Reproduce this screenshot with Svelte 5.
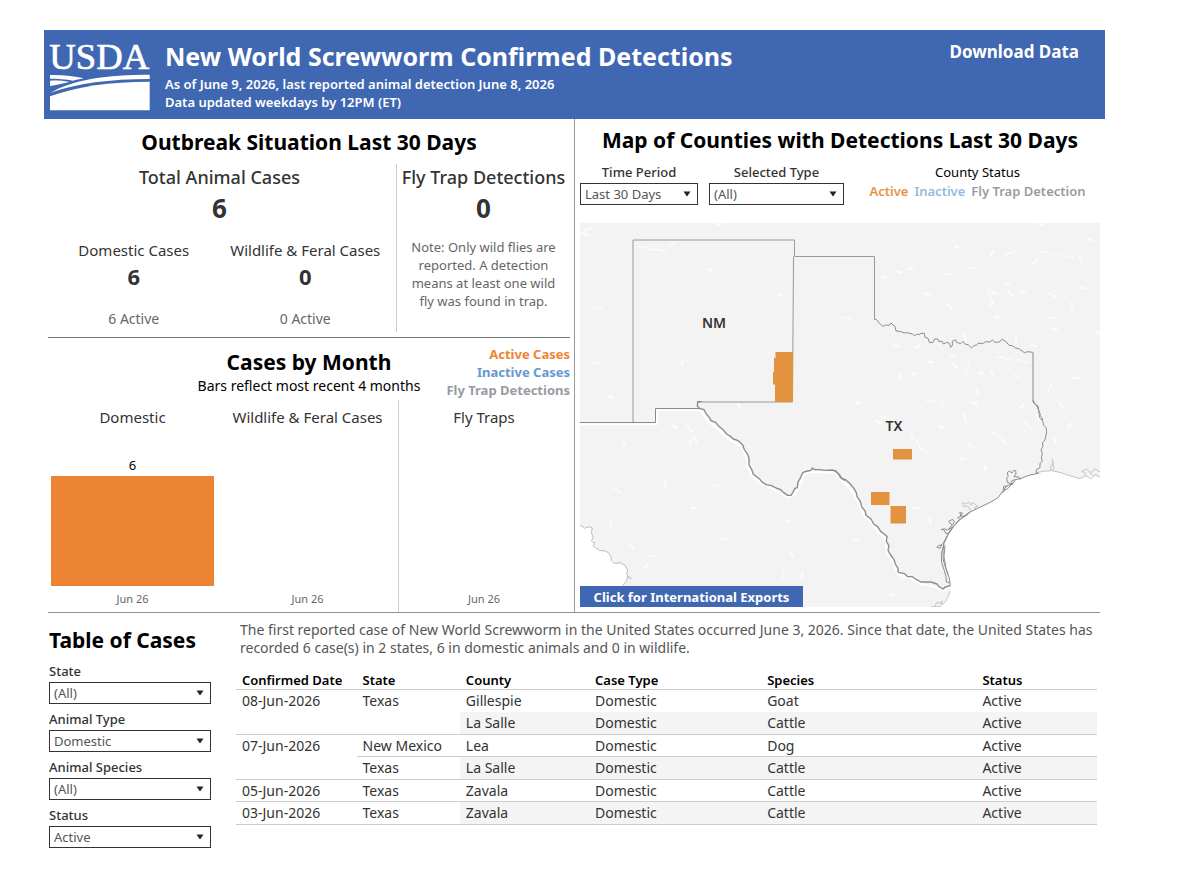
<script>
  const logoText = 'USDA';

  const mapFilters = [
    { id: 'time-period', label: 'Time Period', value: 'Last 30 Days', options: ['Last 30 Days', 'All Time'] },
    { id: 'selected-type', label: 'Selected Type', value: '(All)', options: ['(All)', 'Animal', 'Fly Trap'] }
  ];

  const tableFilters = [
    { id: 'state', label: 'State', value: '(All)', options: ['(All)', 'New Mexico', 'Texas'] },
    { id: 'animal-type', label: 'Animal Type', value: 'Domestic', options: ['(All)', 'Domestic', 'Wildlife'] },
    { id: 'animal-species', label: 'Animal Species', value: '(All)', options: ['(All)', 'Cattle', 'Dog', 'Goat'] },
    { id: 'status', label: 'Status', value: 'Active', options: ['(All)', 'Active', 'Inactive'] }
  ];

  const months = [
    { label: 'Domestic', month: 'Jun 26', count: 6 },
    { label: 'Wildlife & Feral Cases', month: 'Jun 26', count: 0 },
    { label: 'Fly Traps', month: 'Jun 26', count: 0 }
  ];

  const headings = ['Confirmed Date', 'State', 'County', 'Case Type', 'Species', 'Status'];

  // dateSpan / stateSpan mark the first row of a merged group
  const cases = [
    { date: '08-Jun-2026', dateSpan: 2, state: 'Texas', stateSpan: 2, rest: ['Gillespie', 'Domestic', 'Goat', 'Active'], line: false },
    { rest: ['La Salle', 'Domestic', 'Cattle', 'Active'], line: true },
    { date: '07-Jun-2026', dateSpan: 2, state: 'New Mexico', stateSpan: 1, rest: ['Lea', 'Domestic', 'Dog', 'Active'], line: true },
    { state: 'Texas', stateSpan: 1, rest: ['La Salle', 'Domestic', 'Cattle', 'Active'], line: true },
    { date: '05-Jun-2026', dateSpan: 1, state: 'Texas', stateSpan: 1, rest: ['Zavala', 'Domestic', 'Cattle', 'Active'], line: true },
    { date: '03-Jun-2026', dateSpan: 1, state: 'Texas', stateSpan: 1, rest: ['Zavala', 'Domestic', 'Cattle', 'Active'], line: true }
  ];

  // small lakes: x, y, length, tilt
  const lakes = [
    [588, 229, 12, -30], [585, 234, 8, 20], [646, 248, 14, 10], [660, 250, 12, 0], [672, 244, 9, -50], [710, 270, 3, 0],
    [780, 295, 4, 0], [682, 363, 5, 90], [598, 308, 9, 5], [596, 363, 6, 0], [611, 397, 4, 0], [718, 224, 4, 10],
    [675, 427, 6, 20], [689, 428, 10, 50], [696, 440, 9, 60], [691, 441, 5, -60], [624, 446, 7, 90], [665, 484, 5, 90],
    [617, 490, 9, 25], [718, 486, 7, 0], [693, 508, 4, 0], [611, 526, 8, 90], [632, 547, 6, 30], [652, 556, 7, 0],
    [645, 567, 8, -50], [726, 539, 8, 0], [792, 555, 5, 60], [783, 575, 9, 90], [802, 576, 6, 90], [788, 521, 4, 0],
    [957, 247, 4, 0], [992, 253, 6, -70], [1010, 253, 10, -25], [1047, 253, 12, 10], [1066, 256, 14, 15], [1081, 261, 9, 60],
    [1035, 262, 8, -50], [1083, 288, 10, 0], [1052, 295, 9, 20], [1072, 306, 8, 70], [990, 297, 12, 60], [993, 292, 10, 20],
    [991, 304, 7, -50], [1010, 293, 7, 50], [1008, 284, 6, -50], [1023, 292, 4, 0], [1051, 318, 9, 0], [1054, 329, 6, 0],
    [997, 317, 4, 0], [971, 268, 7, -10], [949, 274, 8, 0], [911, 269, 5, 0], [898, 272, 6, 0], [950, 307, 6, 30],
    [884, 277, 4, 0], [927, 294, 5, 0], [847, 318, 8, 0], [896, 346, 4, 0], [917, 347, 6, -40], [931, 362, 4, 0],
    [953, 356, 7, -30], [955, 366, 6, 40], [967, 369, 11, -75], [981, 373, 5, 0], [992, 373, 4, 60], [1004, 358, 16, 5],
    [1022, 361, 12, 8], [1017, 376, 7, 30], [914, 374, 5, 0], [900, 377, 4, 60], [977, 391, 9, 60], [974, 402, 8, -20],
    [1050, 388, 8, -70], [1061, 405, 8, 50], [1076, 378, 6, 0], [1098, 333, 5, 30], [942, 402, 7, 70], [930, 401, 8, 0],
    [883, 417, 5, 0], [858, 403, 4, 0], [965, 418, 9, 60], [975, 404, 5, 0], [1028, 426, 14, 35], [1038, 418, 7, 60],
    [1022, 406, 6, -50], [995, 434, 10, 20], [1004, 441, 9, 50], [971, 446, 9, 30], [919, 445, 13, 60], [925, 450, 8, 30],
    [941, 427, 4, 0], [912, 436, 7, 70], [930, 520, 9, 70], [917, 508, 6, 0], [856, 540, 4, 0], [892, 595, 4, 0],
    [903, 578, 4, 0], [962, 459, 5, 0], [985, 468, 6, 50], [1016, 340, 5, 80], [1034, 346, 4, 0], [739, 406, 4, 40],
    [879, 422, 6, 20], [1090, 240, 4, 0], [1040, 224, 5, 20], [965, 337, 6, 80], [1055, 440, 5, 60], [1070, 425, 5, -60]
  ];
</script>

{#snippet picker(filter)}
  <div class="field">
    <label for={filter.id}>{filter.label}</label>
    <div class="select">
      <select id={filter.id} value={filter.value}>
        {#each filter.options as option}
          <option value={option}>{option}</option>
        {/each}
      </select>
      <svg class="arrow" viewBox="0 0 8 6" aria-hidden="true"><path d="M0.5 0.5h7L4 5.5z" /></svg>
    </div>
  </div>
{/snippet}

<div class="page">
  <header class="banner">
    <svg class="logo" viewBox="24 36 312 222" role="img" aria-label="USDA">
      <text x="28" y="133" class="wordmark">{logoText}</text>
      <path d="M30 150C70 149 102 153 131 160C118 163 108 165 99 167C78 162 52 161 30 161z" />
      <path d="M30 167C50 166 70 167 88 171C66 176 49 181 30 183z" />
      <path d="M30 204C100 163 200 149 329 149V162C210 162 110 175 30 204z" />
      <path d="M30 214C110 184 210 170 329 170V256H30z" />
    </svg>
    <div class="titles">
      <h1>New World Screwworm Confirmed Detections</h1>
      <p>As of June 9, 2026, last reported animal detection June 8, 2026</p>
      <p>Data updated weekdays by 12PM (ET)</p>
    </div>
    <a class="download" href="#download">Download Data</a>
  </header>

  <main>
    <div class="overview">
      <div class="left">
        <section class="situation">
          <h2>Outbreak Situation Last 30 Days</h2>
          <div class="stats">
            <div class="animals">
              <h3>Total Animal Cases</h3>
              <p class="total">6</p>
              <div class="split">
                <div>
                  <h4>Domestic Cases</h4>
                  <p class="count">6</p>
                  <p class="active">6 Active</p>
                </div>
                <div>
                  <h4>Wildlife &amp; Feral Cases</h4>
                  <p class="count">0</p>
                  <p class="active">0 Active</p>
                </div>
              </div>
            </div>
            <div class="traps">
              <h3>Fly Trap Detections</h3>
              <p class="total">0</p>
              <p class="note">Note: Only wild flies are reported. A detection means at least one wild fly was found in trap.</p>
            </div>
          </div>
        </section>

        <section class="monthly">
          <div class="monthly-head">
            <div class="monthly-title">
              <h2>Cases by Month</h2>
              <p>Bars reflect most recent 4 months</p>
            </div>
            <ul class="legend">
              <li class="orange">Active Cases</li>
              <li class="blue">Inactive Cases</li>
              <li class="grey">Fly Trap Detections</li>
            </ul>
          </div>
          <div class="charts">
            {#each months as m}
              <div class="chart">
                <h4>{m.label}</h4>
                <div class="plot">
                  {#if m.count}
                    <span class="value">{m.count}</span>
                    <div class="bar" style="height: {(m.count / 6) * 110}px"></div>
                  {/if}
                </div>
                <p class="month">{m.month}</p>
              </div>
            {/each}
          </div>
        </section>
      </div>

      <section class="map-panel">
        <h2>Map of Counties with Detections Last 30 Days</h2>
        <div class="map-controls">
          {#each mapFilters as filter}
            {@render picker(filter)}
          {/each}
          <div class="status-key">
            <p>County Status</p>
            <ul>
              <li class="key-orange">Active</li>
              <li class="key-blue">Inactive</li>
              <li class="grey">Fly Trap Detection</li>
            </ul>
          </div>
        </div>
        <div class="map">
          <svg viewBox="580 223 520 384" role="img" aria-label="Counties with detections in New Mexico and Texas">
            <rect x="580" y="223" width="520" height="384" fill="#f3f3f3" />
            <g stroke="#fff" stroke-linecap="round" fill="none">
              {#each lakes as [x, y, len, tilt]}
                <path d="M{-len / 2} 0q{len / 4} -1.5 {len / 2} 0t{len / 2} 0" transform="translate({x} {y}) rotate({tilt})" stroke-width={len > 6 ? 1.4 : 2} opacity="0.75" />
              {/each}
            </g>

            <!-- Gulf of Mexico and Pacific inlet -->
            <g transform="translate(835 400) scale(0.33333)" stroke-linejoin="round">
              <path fill="#fff" d="M604 218L650 213L690 222L735 236L765 226L798 232V625H318L333 600L346 570V555L340 530L330 500L324 470L325 435L335 410L352 385L375 360L400 343L420 330L460 310L490 292L505 272L538 247L553 237L585 225z" />
              <path fill="none" stroke="#c4c4c4" stroke-width="3" d="M604 218L625 214L650 212L675 217L700 226L735 236L752 227L748 217L740 215L755 207L767 218L780 207L796 216M752 227L770 236L780 224L795 231M765 218L775 230M649 211L647 196L654 194L652 178L657 205L653 211M345 572L340 590L330 607L318 615L322 604L312 610L306 606L300 618M318 620L290 620" />
              <path fill="none" stroke="#c4c4c4" stroke-width="3" d="M408 332L398 318L386 320L383 307L392 312L402 306L408 316L412 308L422 314L428 320L418 322L422 330" />
            </g>
            <g transform="translate(575 400) scale(0.33333)">
              <path fill="#fff" d="M14 378L30 383L50 383L50 400L55 435L75 452L100 458L118 490L145 492L158 510L155 540L143 558V625H14z" />
              <path fill="none" stroke="#bdbdbd" stroke-width="3" d="M14 378L22 378L28 385L40 380L52 384L49 398L55 412L49 423L60 430L54 438L66 446L75 452L88 452L100 458L108 470L109 482L118 490L135 488L150 496L158 510L155 525L169 536L158 530L155 542L143 556" />
            </g>

            <!-- state and national borders -->
            <g fill="none" stroke="#fff" stroke-width="6" stroke-linejoin="round">
              <path transform="translate(575 400) scale(0.33333)" d="M14 73H246V31H362L379 34L398 64L430 88L464 120L486 131L503 148L516 178L518 198L532 230L568 257L597 268L620 282L640 293L654 288L671 266L687 223L712 215L725 216L777 218L793 235L806 248" />
              <path transform="translate(835 400) scale(0.33333)" d="M0 218L35 255L60 287L76 322L88 349L106 364L131 398L150 414L157 458L177 493L188 522L228 536L260 553L304 561L323 573L345 562" />
            </g>
            <g fill="none" stroke="#9a9a9a" stroke-width="1" stroke-linejoin="round">
              <path d="M633 422V240H794.5V256.5H874.5V319M793.5 256.5L792.5 402H698" />
              <path stroke="#8a8a8a" d="M580 422.5H655.5V408.5H701" />
            </g>
            <g fill="none" stroke="#8c8c8c" stroke-width="3" stroke-linejoin="round">
              <path transform="translate(835 210) scale(0.33333)" d="M118 328L124 328L130 336L143 349L152 345L163 346L168 339L174 345L180 349L183 363L195 364L208 369L217 368L225 371L232 371L239 378L245 372L252 374L258 370L268 370L270 382L279 385L283 397L293 398L299 387L308 387L312 395L321 393L325 402L335 397L343 400L347 412L352 407L352 394L361 389L365 397L377 401L384 394L390 402L400 405L410 414L418 406L424 406L429 400L445 400L452 395L465 396L472 390L480 397L492 396L502 388L514 396L522 406L532 407L542 414L553 417L568 428L578 425L594 427V576L606 589L612 602L612 614L622 624V632" />
              <path transform="translate(835 400) scale(0.33333)" d="M594 0L600 12L609 18L611 32L616 42L613 52L624 64L625 75L633 82L635 95L633 106L629 122L622 128L624 138L618 150L622 160L619 174L622 184L615 190L615 203L605 208L603 218L611 220" />
              <path transform="translate(575 400) scale(0.33333)" stroke-width="4" d="M380 5H368L367 19L376 26L387 29L394 42L403 52L408 62L422 67L432 79L446 91L455 102L468 110L475 117L490 122L503 134L508 149L517 161L522 174L522 195L530 208L535 223L553 236L562 247L574 254L590 257L603 264L617 269L625 277L638 286L648 286L654 276L660 265L667 263L669 246L675 236L684 217L697 213L708 211L712 204L719 209L735 209L752 211L772 210L782 213L791 222L796 232L810 242" />
              <path transform="translate(835 400) scale(0.33333)" stroke-width="4" d="M0 212L14 225L20 235L32 239L46 252L57 265L64 278L66 290L76 304L80 320L91 334L93 346L108 357L116 372L128 380L137 394L156 409L154 424L162 437L159 451L167 465L177 478L181 492L189 505L190 517L209 521L218 530L232 530L243 538L258 546L288 546L306 552L312 560L325 567L330 561L346 557" />
              <path transform="translate(835 400) scale(0.33333)" d="M611 220L585 225L555 236L541 239L535 250L515 258L502 275L490 292L468 306L430 324L405 336L399 343L379 355L358 376L343 396L336 411L327 430L324 452L325 480L334 510L343 534L346 557M540 238L529 244L533 253L517 247L515 235L520 228L516 219L523 213L531 219L536 211L542 212L543 222L537 230L551 231L556 239M517 258L506 259L505 268L510 270L502 279M533 250L517 267L508 270M404 336L390 347L379 350L374 338L382 339L376 350L368 352L374 358M398 342L370 362L355 380L342 388L352 374L345 370L341 364L353 358L358 365L353 373M356 378L344 398L333 401L327 389L318 389L329 386L336 390L345 386M339 403L327 426L321 434L310 437L306 442L315 445L320 435M326 434L319 463L320 488L328 512L333 530L334 546L344 548M330 436L327 470L333 505L340 525" />
            </g>

            <g fill="#e3933f">
              <path d="M775.5 352H793V402H775V384.5H773V372H774V358H775.500z" />
              <rect x="893" y="449" width="19" height="10.500" />
              <rect x="871" y="492" width="18.500" height="13" />
              <rect x="890.500" y="506" width="15.500" height="17.500" />
            </g>
            <text class="place" x="714" y="328">NM</text>
            <text class="place" x="894" y="431">TX</text>
          </svg>
          <button type="button" class="exports">Click for International Exports</button>
        </div>
      </section>
    </div>

    <section class="cases">
      <div class="filters">
        <h2>Table of Cases</h2>
        {#each tableFilters as filter}
          {@render picker(filter)}
        {/each}
      </div>
      <div class="listing">
        <p class="summary">
          The first reported case of New World Screwworm in the United States occurred June 3, 2026. Since that date, the United States has recorded 6 case(s) in 2 states, 6 in domestic animals and 0 in wildlife.
        </p>
        <table>
          <thead>
            <tr>
              {#each headings as heading}
                <th scope="col">{heading}</th>
              {/each}
            </tr>
          </thead>
          <tbody>
            {#each cases as row, i}
              <tr>
                {#if row.dateSpan}<td class="line" rowspan={row.dateSpan}>{row.date}</td>{/if}
                {#if row.stateSpan}<td class="line" rowspan={row.stateSpan}>{row.state}</td>{/if}
                {#each row.rest as cell}
                  <td class:line={row.line} class:shade={i % 2 === 1}>{cell}</td>
                {/each}
              </tr>
            {/each}
          </tbody>
        </table>
      </div>
    </section>
  </main>
</div>

<style>
  :global(body) {
    background: #fff;
  }
  .page {
    box-sizing: border-box;
    padding: 30px 95px 40px 44px;
    font-family: 'Noto Sans', sans-serif;
    font-size: 14px;
    line-height: 18px;
    color: #333;
  }
  .page :global(*) {
    box-sizing: border-box;
  }
  h1, h2, h3, h4, p, ul {
    margin: 0;
    padding: 0;
  }
  ul {
    list-style: none;
  }
  h2 {
    font-size: 21px;
    line-height: 30px;
    font-weight: 700;
    color: #000;
    text-align: center;
    white-space: nowrap;
  }

  .banner {
    display: flex;
    align-items: flex-start;
    min-height: 89px;
    padding: 7px 26px 0 4px;
    background: #4067b1;
    color: #fff;
  }
  .logo {
    width: 104px;
    height: 74px;
    fill: #fff;
    flex: none;
  }
  .wordmark {
    font-family: 'Liberation Serif', serif;
    font-size: 110px;
    stroke: #fff;
    stroke-width: 2;
  }
  .titles {
    margin-left: 13px;
    flex: 1;
    font-size: 13px;
    font-weight: 600;
  }
  h1 {
    font-size: 25px;
    line-height: 38px;
    font-weight: 700;
  }
  .download {
    padding-top: 6px;
    font-size: 17px;
    font-weight: 700;
    color: #fff;
    text-decoration: none;
  }

  .overview {
    display: grid;
    grid-template-columns: 527fr 525fr;
    margin: 0 5px 0 4px;
    border-bottom: 1px solid #8e8e8e;
  }
  .left {
    border-right: 1px solid #9a9a9a;
    padding-right: 4px;
  }
  .situation {
    padding-top: 8px;
    padding-bottom: 5px;
    border-bottom: 1px solid #777;
  }
  .stats {
    display: grid;
    grid-template-columns: 349fr 173fr;
    margin-top: 7px;
    text-align: center;
  }
  h3 {
    font-size: 18px;
    line-height: 26px;
    font-weight: 500;
    white-space: nowrap;
  }
  .total {
    font-size: 26px;
    line-height: 36px;
    font-weight: 700;
  }
  .animals {
    border-right: 1px solid #ccc;
    padding: 0 5px 4px 0;
  }
  .split {
    display: grid;
    grid-template-columns: 1fr 1fr;
    margin-top: 14px;
  }
  h4 {
    font-size: 15px;
    line-height: 20px;
    font-weight: 400;
    white-space: nowrap;
  }
  .count {
    font-size: 22px;
    line-height: 32px;
    font-weight: 700;
  }
  .active {
    margin-top: 18px;
    font-size: 14px;
    color: #666;
  }
  .note {
    margin: 12px 10px 0;
    font-size: 13px;
    color: #666;
  }

  .monthly-head {
    position: relative;
    padding-top: 9px;
  }
  .monthly-title {
    text-align: center;
    font-size: 14px;
    color: #000;
  }
  .legend {
    position: absolute;
    top: 7px;
    right: 0;
    text-align: right;
    font-size: 13px;
    font-weight: 700;
  }
  .orange { color: #ee8434; }
  .blue { color: #6699cc; }
  .grey { color: #979ba3; }
  .key-orange { color: #e3933f; }
  .key-blue { color: #94bbdd; }
  .charts {
    display: grid;
    grid-template-columns: 170fr 180fr 172fr;
    margin-top: 5px;
    text-align: center;
  }
  .chart {
    padding: 7px 4px 4px 3px;
  }
  .chart:last-child {
    border-left: 1px solid #ccc;
  }
  .plot {
    display: flex;
    flex-direction: column;
    justify-content: flex-end;
    height: 159px;
  }
  .value {
    font-size: 13px;
    line-height: 22px;
    color: #000;
  }
  .bar {
    background: #ed8434;
  }
  .month {
    margin-top: 4px;
    font-size: 11px;
    color: #666;
  }

  .map-panel {
    padding: 6px 0 4px 5px;
  }
  .map-controls {
    display: grid;
    grid-template-columns: 118fr 135fr 245fr;
    column-gap: 11px;
    margin: 7px 0 18px;
    text-align: center;
    font-size: 13px;
  }
  .field label {
    display: block;
    line-height: 21px;
    font-weight: 500;
  }
  .select {
    position: relative;
  }
  select {
    display: block;
    width: 100%;
    height: 22px;
    padding: 0 20px 0 4px;
    border: 1px solid #333;
    border-radius: 0;
    background: #fff;
    appearance: none;
    font: inherit;
    font-size: 13px;
    color: #555;
  }
  .arrow {
    position: absolute;
    top: 8px;
    right: 7px;
    width: 8px;
    height: 6px;
    fill: #222;
    pointer-events: none;
  }
  .status-key {
    color: #000;
    line-height: 20px;
  }
  .status-key ul {
    display: flex;
    justify-content: center;
    gap: 6px;
    font-weight: 600;
    line-height: 18px;
    white-space: nowrap;
  }
  .map {
    position: relative;
  }
  .map svg {
    display: block;
    width: 100%;
    height: auto;
  }
  .place {
    font-size: 14px;
    font-weight: 600;
    fill: #333;
    text-anchor: middle;
    stroke: #f3f3f3;
    stroke-width: 2px;
    paint-order: stroke;
  }
  .exports {
    position: absolute;
    left: 0;
    bottom: 0;
    width: 223px;
    height: 21px;
    padding: 0;
    border: 0;
    background: #4067b1;
    color: #fff;
    font: inherit;
    font-size: 13px;
    font-weight: 700;
    white-space: nowrap;
  }

  .cases {
    display: grid;
    grid-template-columns: 162px 1fr;
    column-gap: 25px;
    padding: 8px 8px 0 5px;
  }
  .filters h2 {
    margin: 4px 0 6px;
    text-align: left;
  }
  .filters .field {
    margin-bottom: 5px;
    font-size: 13px;
  }
  .summary {
    padding-left: 4px;
    margin-bottom: 13px;
    color: #555;
  }
  table {
    width: 100%;
    table-layout: fixed;
    border-spacing: 0;
    text-align: left;
    font-size: 14px;
  }
  th {
    height: 20px;
    padding: 0 0 0 6px;
    border-bottom: 1px solid #ccc;
    font-size: 13px;
    font-weight: 600;
    color: #000;
    white-space: nowrap;
  }
  th:nth-child(1) { width: 14%; }
  th:nth-child(2) { width: 12%; }
  th:nth-child(3) { width: 15%; }
  th:nth-child(4) { width: 20%; }
  th:nth-child(5) { width: 25%; }
  td {
    height: 22px;
    padding: 2px 0 1px 6px;
    vertical-align: top;
    white-space: nowrap;
  }
  tr:nth-child(even) td {
    height: 23px;
  }
  .line {
    border-bottom: 1px solid #ccc;
  }
  .shade {
    background: #f4f4f4;
  }
</style>
